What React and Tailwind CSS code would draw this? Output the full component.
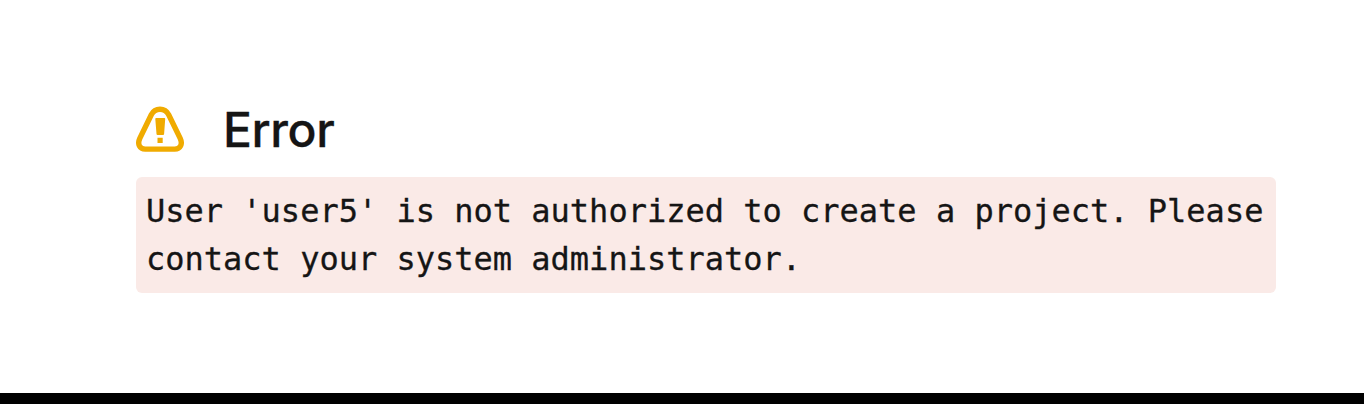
function WarningIcon() {
  return (
    <svg className="h-12 w-12 shrink-0" viewBox="0 0 48 48" fill="none" aria-hidden="true">
      <path
        d="M15.300 9.800C17.100 6.300 20 4.300 24 4.300s6.900 2 8.700 5.500l11.500 23.500c2.600 5.700.300 10.800-5.400 10.800H9.200c-5.700 0-8-5.100-5.400-10.800Z"
        stroke="#f0ab00"
        strokeWidth="5.400"
      />
      <path d="M20.200 13h8.200q.9 0 .8 1l-1.100 15.100q-.1.900-1 .9h-5.600q-.9 0-1-.9L19.300 14q-.1-1 .9-1ZM21.500 32.700h5.200v5.300h-5.200Z" fill="#f0ab00" />
    </svg>
  );
}

export default function App() {
  return (
    <main className="flex h-[404px] w-[1364px] flex-col overflow-hidden border-b-[11px] border-black bg-white pt-[105px] pl-[136px] text-[#151515]">
      <div className="flex h-12 items-center gap-[39px]">
        <WarningIcon />
        <h1 className="pt-0.5 font-['Inter',sans-serif] text-[48px] leading-12 font-medium tracking-[-0.4px] [-webkit-text-stroke:0.3px_#151515]">Error</h1>
      </div>
      <pre className="mt-6 h-[116px] w-[1140px] rounded-md bg-[#faeae7] px-2.5 py-2.5 font-['DejaVu_Sans_Mono',monospace] text-[32px] leading-12 whitespace-pre-wrap [-webkit-text-stroke:0.3px_#151515]">
        User 'user5' is not authorized to create a project. Please contact your system administrator.
      </pre>
    </main>
  );
}
